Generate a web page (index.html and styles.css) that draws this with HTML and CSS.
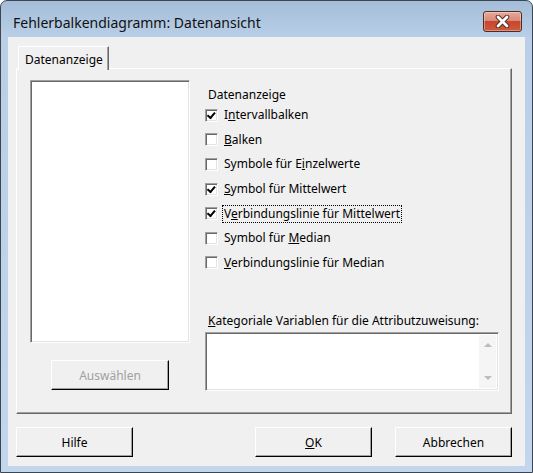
FILE: index.html
```html
<!DOCTYPE html>
<html lang="de">
<head>
  <meta charset="UTF-8" />
  <title>Fehlerbalkendiagramm: Datenansicht</title>
  <link rel="stylesheet" href="styles.css">
</head>
<body>

  <div class="window">
    <div class="titlebar">
      <span class="title">Fehlerbalkendiagramm: Datenansicht</span>
      <div class="close">
        <svg width="17" height="13" viewBox="0 0 17 13">
          <path d="M4 2 L13 11 M13 2 L4 11" stroke="#5a2a22" stroke-width="4.6" stroke-linecap="round" />
          <path d="M4 2 L13 11 M13 2 L4 11" stroke="#fff" stroke-width="2.8" stroke-linecap="round" />
        </svg>
      </div>
    </div>

    <div class="client">
      <div class="tabs">
        <div class="tab">Datenanzeige</div>
      </div>

      <div class="panel">
        <div class="left-col">
          <div class="listbox"></div>
          <div class="btn disabled">Auswählen</div>
        </div>

        <div class="right-col">
          <div class="group-label">Datenanzeige</div>
          <ul class="checks">
            <li><span class="cb on"></span><span class="txt">I<u>n</u>tervallbalken</span></li>
            <li><span class="cb"></span><span class="txt"><u>B</u>alken</span></li>
            <li><span class="cb"></span><span class="txt">Symbole für E<u>i</u>nzelwerte</span></li>
            <li><span class="cb on"></span><span class="txt"><u>S</u>ymbol für Mittelwert</span></li>
            <li><span class="cb on"></span><span class="txt focus">V<u>e</u>rbindungslinie für Mittelwert</span></li>
            <li><span class="cb"></span><span class="txt">Symbol für <u>M</u>edian</span></li>
            <li><span class="cb"></span><span class="txt"><u>V</u>erbindungslinie für Median</span></li>
          </ul>

          <div class="field-label"><u>K</u>ategoriale Variablen für die Attributzuweisung:</div>
          <div class="varbox">
            <div class="vscroll">
              <span class="arrow up"></span>
              <span class="arrow down"></span>
            </div>
          </div>
        </div>
      </div>

      <div class="buttons">
        <div class="btn">Hilfe</div>
        <div class="spacer"></div>
        <div class="btn"><u>O</u>K</div>
        <div class="btn">Abbrechen</div>
      </div>
    </div>
  </div>

</body>
</html>
```

FILE: styles.css
```css
body {
  margin: 0;
  background-color: #fff;
  font-family: "Noto Sans", "Open Sans", sans-serif;
  font-size: 12px;
  color: #000;
}
.window {
  width: 533px;
  height: 473px;
  box-sizing: border-box;
  border: 1px solid #3d4650;
  border-radius: 7px 7px 0 0;
  background: linear-gradient(#a4bdd8, #b9cfe7 36px, #c2d7ed);
  padding: 0 7px 6px 7px;
  display: flex;
  flex-direction: column;
}
.titlebar {
  height: 36px;
  display: flex;
  align-items: flex-start;
}
.title {
  margin: 12px 0 0 5px;
  font-size: 14px;
  color: #111;
}
.close {
  margin: 10px 3px 0 auto;
  width: 39px;
  height: 21px;
  box-sizing: border-box;
  border: 1px solid #4e2c25;
  border-radius: 3px;
  background: linear-gradient(#e9a899, #d88a78 45%, #c7462f 50%, #cf5a3c);
  box-shadow: inset 0 0 0 1px rgba(255,255,255,0.35);
  display: flex;
  justify-content: center;
  align-items: center;
}
.client {
  flex: 1;
  background-color: #f0f0f0;
  padding: 9px 13px 0 8px;
  display: flex;
  flex-direction: column;
}
.tabs {
  display: flex;
  padding-left: 2px;
  height: 23px;
  margin-bottom: -1px;
  position: relative;
}
.tab {
  width: 91px;
  box-sizing: border-box;
  border: 1px solid #fff;
  border-right: 1px solid #696969;
  border-bottom: none;
  box-shadow: inset -1px 0 #a0a0a0;
  background-color: #f0f0f0;
  padding: 4px 0 0 6px;
  height: 24px;
}
/* tab page */
.panel {
  height: 346px;
  box-sizing: border-box;
  border: 1px solid;
  border-color: #fff #696969 #696969 #fff;
  box-shadow: inset -1px -1px #a0a0a0;
  padding: 11px 0 0 13px;
  display: flex;
  gap: 15px;
}
.left-col {
  width: 160px;
  display: flex;
  flex-direction: column;
  align-items: center;
}
.listbox, .varbox {
  box-sizing: border-box;
  background-color: #fff;
  border: 1px solid;
  border-color: #a0a0a0 #fff #fff #a0a0a0;
  box-shadow: inset 1px 1px #696969, inset -1px -1px #e3e3e3;
}
.listbox {
  width: 160px;
  height: 263px;
}
.btn {
  width: 117px;
  height: 30px;
  box-sizing: border-box;
  border: 1px solid;
  border-color: #fff #000 #000 #fff;
  box-shadow: inset -1px -1px #a0a0a0;
  background-color: #f0f0f0;
  display: flex;
  justify-content: center;
  align-items: center;
}
.btn.disabled {
  margin-top: 17px;
  width: 118px;
  color: #a0a0a0;
}
.right-col {
  width: 294px;
  padding-top: 6px;
}
.group-label {
  line-height: 17px;
  padding-left: 3px;
}
.checks {
  list-style: none;
  margin: 0;
  padding: 0;
}
.checks li {
  height: 24.6px;
  display: flex;
  align-items: center;
  gap: 5px;
}
.cb {
  width: 13px;
  height: 13px;
  box-sizing: border-box;
  background-color: #fff;
  border: 1px solid;
  border-color: #a0a0a0 #fff #fff #a0a0a0;
  box-shadow: inset 1px 1px #696969, inset -1px -1px #e3e3e3;
  position: relative;
}
.cb.on::after {
  content: "";
  position: absolute;
  left: 2px;
  top: 0px;
  width: 3px;
  height: 6px;
  border: solid #000;
  border-width: 0 2px 2px 0;
  transform: rotate(40deg) translate(1px, 0);
}
.txt {
  padding: 0 1px;
  line-height: 16px;
}
.txt.focus {
  outline: 1px dotted #000;
}
.field-label {
  margin-top: 38px;
  line-height: 16px;
  padding-left: 3px;
}
.varbox {
  margin-top: 3px;
  height: 59px;
  display: flex;
  justify-content: flex-end;
  padding: 2px;
}
.vscroll {
  width: 17px;
  background-color: #f5f5f5;
  display: flex;
  flex-direction: column;
  justify-content: space-between;
  align-items: center;
  padding: 8px 0;
}
.arrow {
  width: 0;
  height: 0;
  border-left: 4px solid transparent;
  border-right: 4px solid transparent;
}
.arrow.up {
  border-bottom: 4px solid #bcbcbc;
}
.arrow.down {
  border-top: 4px solid #bcbcbc;
}
.buttons {
  width: 496px;
  margin-top: 13px;
  display: flex;
  gap: 23px;
}
.spacer {
  flex: 1;
}
```
